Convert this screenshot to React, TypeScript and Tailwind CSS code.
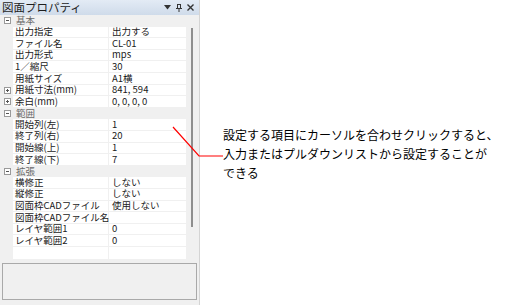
import React from "react";

type Row =
  | { kind: "cat"; label: string; open: boolean }
  | { kind: "prop"; label: string; value: string; expand?: boolean };

const rows: Row[] = [
  { kind: "cat", label: "基本", open: true },
  { kind: "prop", label: "出力指定", value: "出力する" },
  { kind: "prop", label: "ファイル名", value: "CL-01" },
  { kind: "prop", label: "出力形式", value: "mps" },
  { kind: "prop", label: "1／縮尺", value: "30" },
  { kind: "prop", label: "用紙サイズ", value: "A1横" },
  { kind: "prop", label: "用紙寸法(mm)", value: "841, 594", expand: true },
  { kind: "prop", label: "余白(mm)", value: "0, 0, 0, 0", expand: true },
  { kind: "cat", label: "範囲", open: true },
  { kind: "prop", label: "開始列(左)", value: "1" },
  { kind: "prop", label: "終了列(右)", value: "20" },
  { kind: "prop", label: "開始線(上)", value: "1" },
  { kind: "prop", label: "終了線(下)", value: "7" },
  { kind: "cat", label: "拡張", open: true },
  { kind: "prop", label: "横修正", value: "しない" },
  { kind: "prop", label: "縦修正", value: "しない" },
  { kind: "prop", label: "図面枠CADファイル", value: "使用しない" },
  { kind: "prop", label: "図面枠CADファイル名", value: "" },
  { kind: "prop", label: "レイヤ範囲1", value: "0" },
  { kind: "prop", label: "レイヤ範囲2", value: "0" },
];

const font = { fontFamily: '"Noto Sans CJK JP", "Liberation Sans", sans-serif' };

function Box({ plus }: { plus: boolean }) {
  return (
    <div className="relative w-[7px] h-[7px] border border-[#9a9a9a] bg-white">
      <div className="absolute left-[1px] top-[2px] w-[3px] h-px bg-[#555]" />
      {plus && <div className="absolute left-[2px] top-[1px] w-px h-[3px] bg-[#555]" />}
    </div>
  );
}

export default function App() {
  return (
    <div className="relative w-[510px] h-[305px] bg-white overflow-hidden" style={font}>
      <div className="w-[200px] h-[305px] flex flex-col bg-[#f0f0f0] border-r border-[#d4d4d4]">
        {/* title */}
        <div className="h-[15px] flex items-center justify-between pl-[2px] bg-gradient-to-b from-[#e3ebf5] to-[#cfdbea]">
          <span className="text-[11.5px] leading-none text-[#1e1e1e]">図面プロパティ</span>
          <div className="flex items-center gap-[5px] pr-[5px]">
            <svg width="7" height="5" viewBox="0 0 7 5">
              <polygon points="0,0 7,0 3.5,4.5" fill="#333" />
            </svg>
            <svg width="6" height="8" viewBox="0 0 6 8">
              <rect x="1.5" y="0.5" width="3" height="4" fill="none" stroke="#333" />
              <line x1="0" y1="4.5" x2="6" y2="4.5" stroke="#333" />
              <line x1="3" y1="5" x2="3" y2="8" stroke="#333" />
            </svg>
            <svg width="7" height="7" viewBox="0 0 7 7">
              <path d="M0.5 0.5 L6.5 6.5 M6.5 0.5 L0.5 6.5" stroke="#333" strokeWidth="1.4" />
            </svg>
          </div>
        </div>

        {/* grid */}
        <div className="flex h-[244px]">
          <div className="w-[186px] bg-white flex flex-col">
            {rows.map((r, i) =>
              r.kind === "cat" ? (
                <div key={i} className="h-[11.6px] flex items-center bg-[#f0f0f0] text-[9.5px] leading-none text-[#6a6a6a]">
                  <div className="w-[13px] flex justify-center pl-[1px]">
                    <Box plus={!r.open} />
                  </div>
                  <span className="pl-[3px]">{r.label}</span>
                </div>
              ) : (
                <div key={i} className="h-[11.6px] flex text-[9.5px] leading-none text-[#1a1a1a]">
                  <div className="w-[13px] bg-[#f0f0f0] flex items-center justify-center pl-[1px]">
                    {r.expand && <Box plus />}
                  </div>
                  <div className="w-[96px] flex items-center pl-[2px] border-b border-r border-[#f0f0f0] whitespace-nowrap">
                    {r.label}
                  </div>
                  <div className="flex-1 flex items-center pl-[3px] border-b border-[#f0f0f0] whitespace-nowrap">
                    {r.value}
                  </div>
                </div>
              )
            )}
            <div className="flex-1 flex">
              <div className="w-[13px] bg-[#f0f0f0]" />
              <div className="w-[96px] border-r border-[#f0f0f0]" />
            </div>
          </div>
          <div className="w-[13px] bg-[#f0f0f0] pt-[13px] pl-[5px]">
            <div className="w-[2px] h-[199px] bg-[#8e8e8e]" />
          </div>
        </div>

        {/* description box */}
        <div className="mt-[4px] mx-[2px] h-[37px] border border-[#a9a9a9] bg-[#f0f0f0]" />
      </div>

      {/* callout */}
      <svg className="absolute left-0 top-0" width="510" height="305">
        <polyline points="173,127 199,156 223,156" fill="none" stroke="#ff0000" strokeWidth="1.2" />
      </svg>
      <div className="absolute left-[223px] top-[125px] text-[12px] leading-[19px] text-black">
        <div>設定する項目にカーソルを合わせクリックすると、</div>
        <div>入力またはプルダウンリストから設定することが</div>
        <div>できる</div>
      </div>
    </div>
  );
}
